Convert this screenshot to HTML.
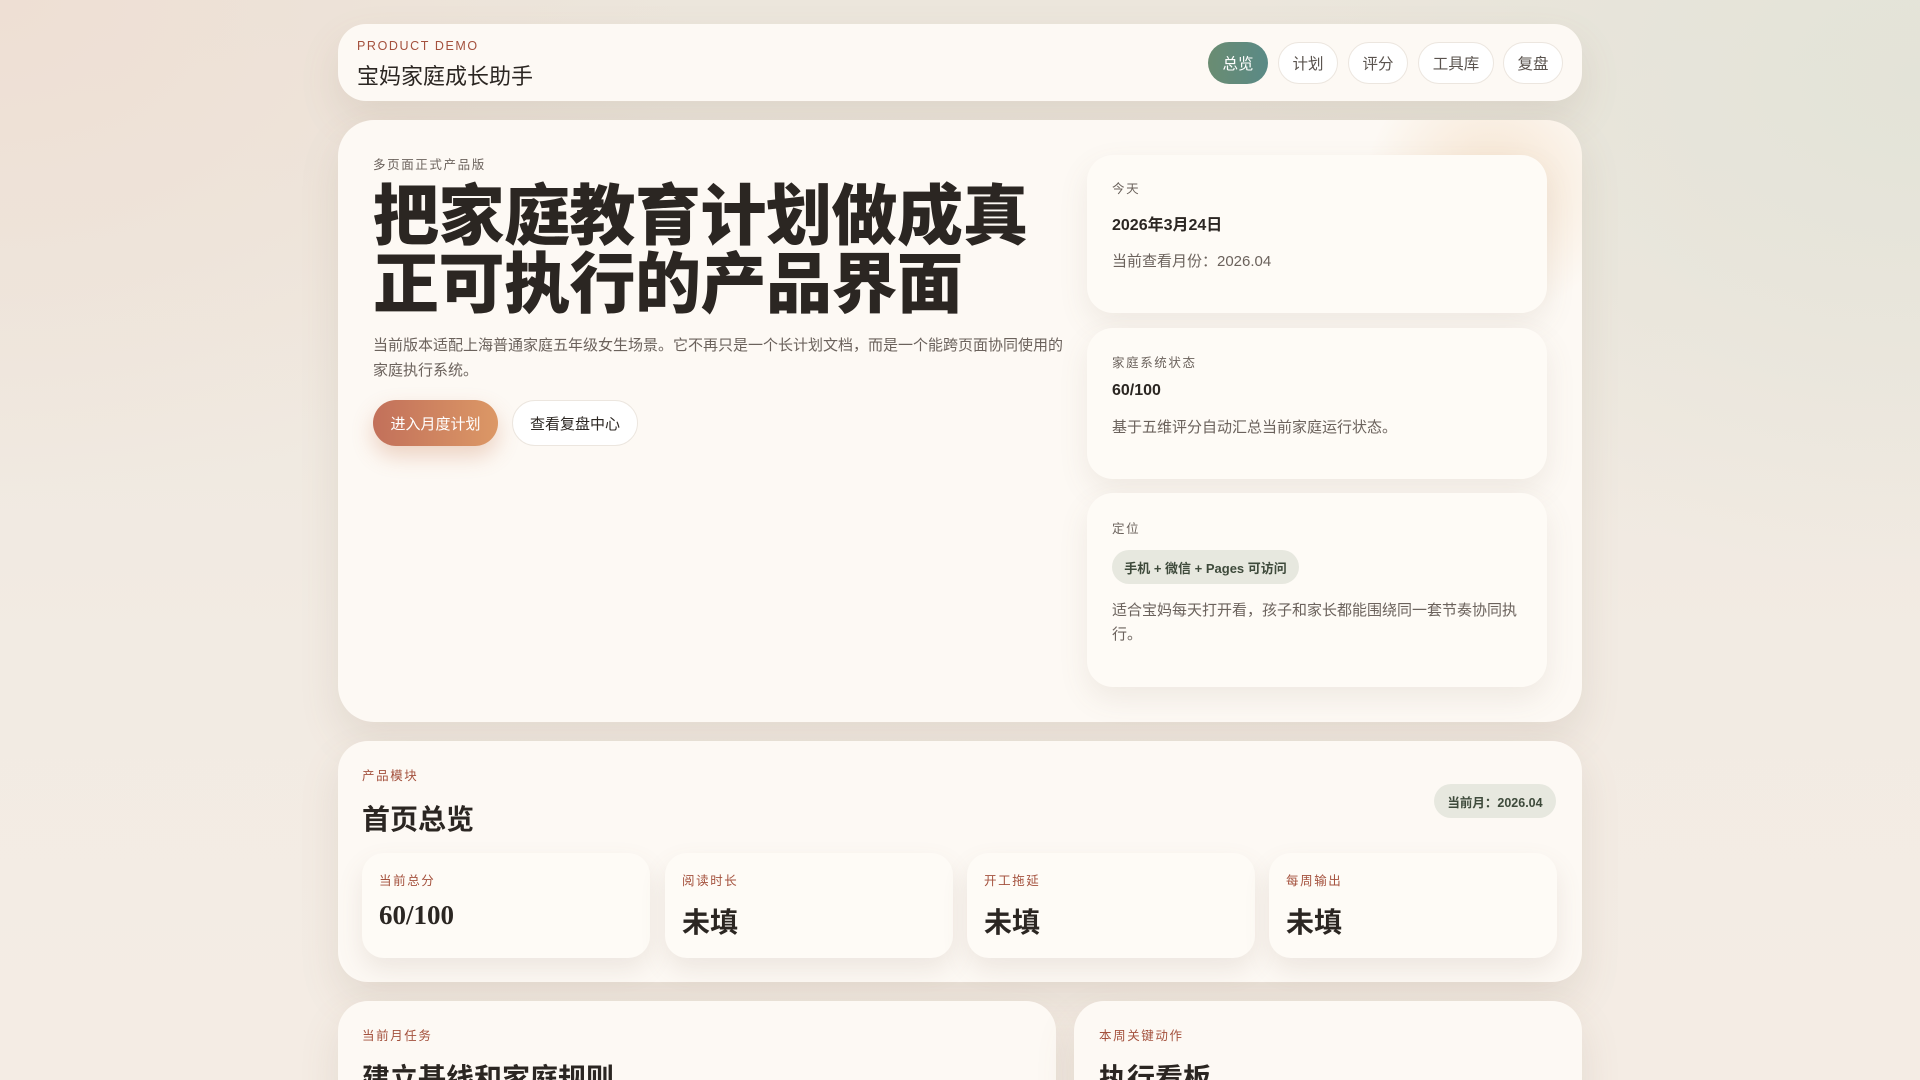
<!DOCTYPE html>
<html style="width:1920px;height:1080px;overflow:hidden"><head><meta charset="utf-8"><style>
*{box-sizing:border-box;margin:0;padding:0}
body{width:1920px;height:1080px;overflow:hidden;font-family:"Liberation Sans","Noto Sans CJK SC",sans-serif;color:#2b2622;
background:radial-gradient(ellipse 700px 500px at 0 0,#eedfd4 0%,rgba(238,223,212,0) 100%),radial-gradient(ellipse 700px 500px at 1920px 80px,#e3e3d8 0%,rgba(227,227,216,0) 100%),linear-gradient(180deg,#ece6dc 0%,#f2ebe3 60%,#f4ece4 100%);position:relative}
.clip{position:absolute;left:0;top:0;width:1920px;height:1080px;overflow:hidden}
.card{position:absolute;background:#fdf9f4;box-shadow:0 18px 40px rgba(120,100,80,.13);}
.hdr{left:338px;top:24px;width:1244px;height:77px;border-radius:28px}
.eyebrow{position:absolute;left:19px;top:15px;font-size:12.5px;letter-spacing:1.6px;color:#a4513d}
.brand{position:absolute;left:19px;top:35px;font-size:22px;color:#2b2622}
.nav{position:absolute;top:18px;height:42px;border-radius:21px;background:#fff;border:1px solid #ece6df;font-size:15.5px;color:#5a534e;display:flex;align-items:center;justify-content:center}
.nav.on{background:linear-gradient(90deg,#6a8c72,#5a8a86);color:#fff;border:none}
.hero{left:338px;top:120px;width:1244px;height:602px;border-radius:36px;overflow:hidden}
.glow{position:absolute;right:-40px;top:-60px;width:260px;height:260px;border-radius:50%;background:radial-gradient(circle,rgba(236,200,160,.45),rgba(236,200,160,0) 70%)}
.small{font-size:12.5px;letter-spacing:1.6px;color:#6b625c}
.red{color:#a4513d}
h1{position:absolute;left:35px;top:62px;font-size:66px;line-height:68px;font-weight:900;color:#2b2622;letter-spacing:-0.5px}
.para{position:absolute;left:35px;top:213px;width:700px;font-size:15px;line-height:25px;color:#6b625c}
.btn{position:absolute;top:280px;height:46px;border-radius:23px;font-size:15px;display:flex;align-items:center;justify-content:center}
.sub{position:absolute;left:1087px;width:460px;background:#fefbf6;border-radius:26px;box-shadow:0 12px 30px rgba(120,100,80,.10)}
.sub .small{position:absolute;left:25px}
.pill{background:#e7e8df;color:#3e4a3b;font-weight:bold;border-radius:18px;font-size:13px;display:flex;align-items:center;justify-content:center;position:absolute}
.stat{position:absolute;top:112px;width:288px;height:105px;background:#fefbf6;border-radius:22px;box-shadow:0 12px 26px rgba(120,100,80,.12)}
.stat .small{position:absolute;left:17px;top:17px}
.stat .v{position:absolute;left:17px;top:48px;font-size:28px;font-weight:bold;color:#2b2622}
</style></head><body>
<div class="clip">
<div class="card hdr">
 <div class="eyebrow">PRODUCT DEMO</div>
 <div class="brand">宝妈家庭成长助手</div>
 <div class="nav on" style="left:870px;width:60px">总览</div>
 <div class="nav" style="left:940px;width:60px">计划</div>
 <div class="nav" style="left:1010px;width:60px">评分</div>
 <div class="nav" style="left:1080px;width:76px">工具库</div>
 <div class="nav" style="left:1165px;width:60px">复盘</div>
</div>
<div class="card hero">
 <div class="glow"></div>
 <div class="small" style="position:absolute;left:35px;top:34px">多页面正式产品版</div>
 <h1>把家庭教育计划做成真<br>正可执行的产品界面</h1>
 <div class="para">当前版本适配上海普通家庭五年级女生场景。它不再只是一个长计划文档，而是一个能跨页面协同使用的家庭执行系统。</div>
 <div class="btn" style="left:35px;width:125px;background:linear-gradient(90deg,#c2705a,#dc9866);color:#fff;box-shadow:0 10px 22px rgba(200,120,80,.3)">进入月度计划</div>
 <div class="btn" style="left:174px;width:126px;background:#fff;border:1px solid #ece6df;color:#2b2622">查看复盘中心</div>
</div>
<div class="sub" style="top:155px;height:158px">
 <div class="small" style="top:23px">今天</div>
 <div style="position:absolute;left:25px;top:56px;font-size:16px;font-weight:bold">2026年3月24日</div>
 <div style="position:absolute;left:25px;top:95px;font-size:15px;color:#6b625c">当前查看月份：2026.04</div>
</div>
<div class="sub" style="top:328px;height:151px">
 <div class="small" style="top:24px">家庭系统状态</div>
 <div style="position:absolute;left:25px;top:54px;font-size:16px;font-weight:bold">60/100</div>
 <div style="position:absolute;left:25px;top:88px;font-size:15px;color:#6b625c">基于五维评分自动汇总当前家庭运行状态。</div>
</div>
<div class="sub" style="top:493px;height:194px">
 <div class="small" style="top:25px">定位</div>
 <div class="pill" style="left:25px;top:57px;width:187px;height:34px">手机 + 微信 + Pages 可访问</div>
 <div style="position:absolute;left:25px;top:106px;width:420px;font-size:15px;line-height:24px;color:#6b625c">适合宝妈每天打开看，孩子和家长都能围绕同一套节奏协同执行。</div>
</div>
<div class="card" style="left:338px;top:741px;width:1244px;height:241px;border-radius:30px">
 <div class="small red" style="position:absolute;left:24px;top:24px">产品模块</div>
 <div style="position:absolute;left:24px;top:57px;font-size:28px;font-weight:bold">首页总览</div>
 <div class="pill" style="left:1096px;top:43px;width:122px;height:34px;font-size:12.5px">当前月：2026.04</div>
 <div class="stat" style="left:24px"><div class="small red">当前总分</div><div class="v" style="font-family:'Liberation Serif',serif;top:47px;font-size:27px">60/100</div></div>
 <div class="stat" style="left:327px"><div class="small red">阅读时长</div><div class="v">未填</div></div>
 <div class="stat" style="left:629px"><div class="small red">开工拖延</div><div class="v">未填</div></div>
 <div class="stat" style="left:931px"><div class="small red">每周输出</div><div class="v">未填</div></div>
</div>
<div class="card" style="left:338px;top:1001px;width:718px;height:200px;border-radius:30px">
 <div class="small red" style="position:absolute;left:24px;top:24px">当前月任务</div>
 <div style="position:absolute;left:24px;top:56px;font-size:28px;font-weight:bold">建立基线和家庭规则</div>
</div>
<div class="card" style="left:1074px;top:1001px;width:508px;height:200px;border-radius:30px">
 <div class="small red" style="position:absolute;left:25px;top:24px">本周关键动作</div>
 <div style="position:absolute;left:25px;top:56px;font-size:28px;font-weight:bold">执行看板</div>
</div>
</div>
</body></html>
